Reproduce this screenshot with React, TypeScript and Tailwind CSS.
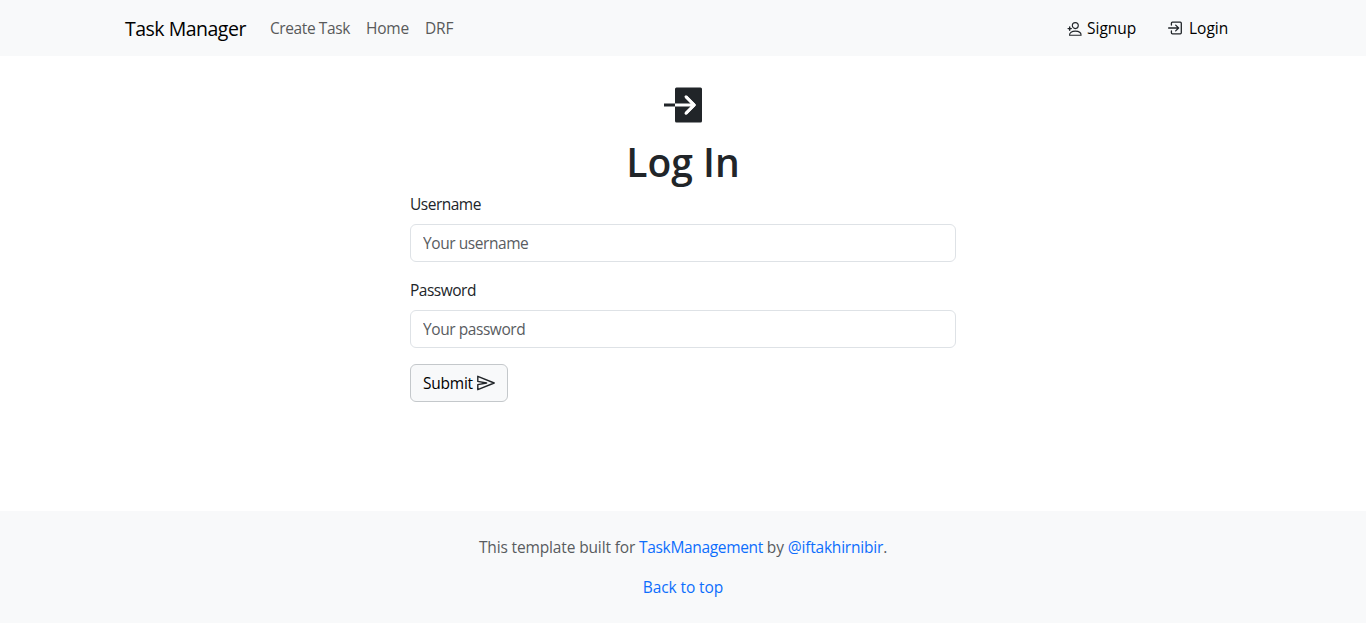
import React from "react";

function SignupIcon() {
  return (
    <svg width="16" height="16" viewBox="0 0 16 16" fill="none" stroke="#212529" strokeWidth="1.1" strokeLinecap="round" className="mt-px shrink-0">
      <circle cx="8.3" cy="4.6" r="3" />
      <path d="M2.5 14.2c0-2.7 2.3-4.1 5.8-4.1s5.8 1.4 5.8 4.1z" strokeLinejoin="round" />
      <path d="M2.7 6v3.2M1.1 7.6h3.2" strokeWidth="1.4" />
    </svg>
  );
}

function LoginIcon() {
  return (
    <svg width="16" height="16" viewBox="0 0 16 16" fill="none" stroke="#212529" strokeWidth="1.3" strokeLinecap="round" strokeLinejoin="round" className="shrink-0">
      <path d="M3.4 5V3.2c0-.6.4-1 1-1h7.9c.6 0 1 .4 1 1v9.6c0 .6-.4 1-1 1H4.4c-.6 0-1-.4-1-1V11" />
      <path d="M.6 8h9.9M7.7 5.1 10.6 8l-2.9 2.9" />
    </svg>
  );
}

function EnterIcon() {
  return (
    <svg width="38" height="36" viewBox="0 0 38 36" fill="none">
      <rect x="11" y="0.5" width="27" height="35" rx="1.5" fill="#212529" />
      <path d="M0 18h11.5" stroke="#212529" strokeWidth="3" />
      <path d="M11 18h18.5M22 9.8l8.2 8.2-8.2 8.2" stroke="#fff" strokeWidth="3" strokeLinecap="butt" strokeLinejoin="round" />
      <path d="M22 9.8l8.2 8.2-8.2 8.2" stroke="#fff" strokeWidth="3" strokeLinecap="round" strokeLinejoin="round" />
    </svg>
  );
}

function SendIcon() {
  return (
    <svg width="18" height="16" viewBox="0 0 18 16" fill="none" stroke="#212529" strokeWidth="1.4" strokeLinejoin="round" className="shrink-0">
      <path d="M.8 1.3 17.2 8 .8 14.7V9.6L9.6 8 .8 6.4z" />
    </svg>
  );
}

interface FieldProps {
  id: string;
  label: string;
  type: string;
  placeholder: string;
}

function Field({ id, label, type, placeholder }: FieldProps) {
  return (
    <div className="mb-4">
      <label htmlFor={id} className="mb-2 block tracking-[-0.5px]">{label}</label>
      <input
        id={id}
        type={type}
        placeholder={placeholder}
        className="block h-[38px] w-full rounded-md border border-[#dee2e6] bg-white px-3 tracking-[-0.43px] placeholder:text-[#595c5f] placeholder:opacity-100"
      />
    </div>
  );
}

export default function App() {
  return (
    <div className="flex h-[623px] flex-col bg-white font-['Open_Sans',sans-serif] text-[15.5px] leading-6 text-[#212529]">
      <nav className="flex h-14 shrink-0 items-center bg-[#f8f9fa] pl-[125px] pr-[130px]">
        <a href="#" className="w-[145px] whitespace-nowrap pt-0.5 text-[19.5px] leading-[30px] tracking-[-0.5px] text-black">Task Manager</a>
        <div className="flex text-[#595a5a]">
          <a href="#" className="w-24 whitespace-nowrap tracking-[-0.4px]">Create Task</a>
          <a href="#" className="w-[59px] tracking-[-0.2px]">Home</a>
          <a href="#" className="tracking-[-0.2px]">DRF</a>
        </div>
        <div className="ml-auto flex text-black">
          <a href="#" className="flex w-[101px] items-center gap-1">
            <SignupIcon />
            Signup
          </a>
          <a href="#" className="flex w-[68px] items-center gap-[5px]">
            <LoginIcon />
            Login
          </a>
        </div>
      </nav>

      <main className="mx-auto w-[546px] grow">
        <div className="flex justify-center pt-[31px]">
          <EnterIcon />
        </div>
        <h1 className="mb-2 mt-[15px] text-center text-[39px] font-semibold leading-[48px]">Log In</h1>
        <form className="-mt-0.5" onSubmit={(e) => e.preventDefault()}>
          <Field id="username" label="Username" type="text" placeholder="Your username" />
          <Field id="password" label="Password" type="password" placeholder="Your password" />
          <button type="submit" className="flex h-[38px] w-[98px] items-center gap-1 rounded-md border border-[#c4c8cb] bg-[#f8f9fa] pl-3 text-black">
            <span className="w-[50px] tracking-[-0.25px]">Submit</span>
            <SendIcon />
          </button>
        </form>
      </main>

      <footer className="h-28 shrink-0 bg-[#f8f9fa] pt-6 text-center text-[#595c5f]">
        <p className="mb-4 tracking-[-0.14px]">
          This template built for <a href="#" className="tracking-[-0.33px] text-[#0d6efd]">TaskManagement</a> by{" "}
          <a href="#" className="tracking-[-0.2px] text-[#0d6efd]">@iftakhirnibir</a>.
        </p>
        <p>
          <a href="#" className="tracking-[-0.1px] text-[#0d6efd]">Back to top</a>
        </p>
      </footer>
    </div>
  );
}
